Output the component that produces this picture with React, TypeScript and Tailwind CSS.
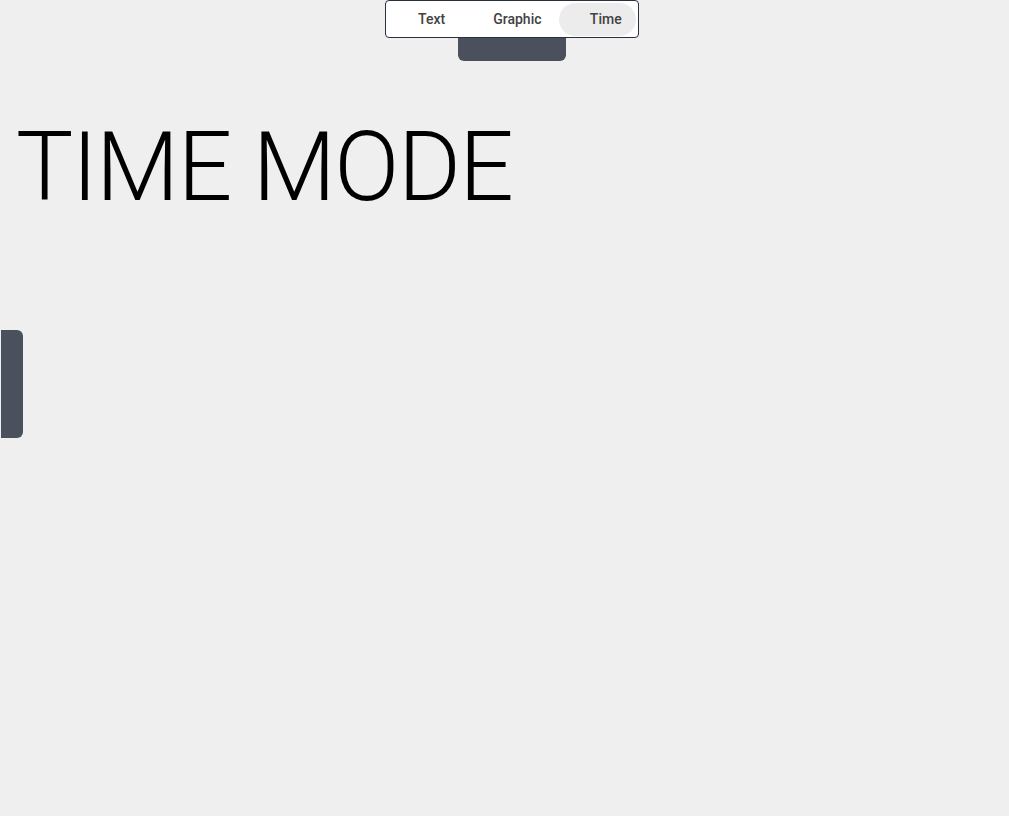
import { useState } from "react";

const modes = ["Text", "Graphic", "Time"] as const
type Mode = typeof modes[number]

export default function App() {
    const [mode, setMode] = useState<Mode>("Time")

    const btnStyle = "h-[33px] rounded-full text-sm font-medium text-[#424242] cursor-pointer"

    return (
        <div className="min-h-[816px] w-full bg-[#efefef] font-['Roboto',sans-serif] relative">
            <div className="flex flex-col items-center pl-[14px]">
                <div className="flex items-center w-[254px] h-[38px] px-[2px] bg-white border border-[#27303d] rounded-[4px]">
                    <button
                        className={`${btnStyle} w-[89px] ${mode == "Text" ? "bg-[#ececec]" : ""}`}
                        onClick={() => setMode("Text")}>
                        Text
                    </button>
                    <button
                        className={`${btnStyle} w-[84px] ${mode == "Graphic" ? "bg-[#ececec]" : ""}`}
                        onClick={() => setMode("Graphic")}>
                        Graphic
                    </button>
                    <button
                        className={`${btnStyle} w-[77px] pl-[17px] ${mode == "Time" ? "bg-[#ececec]" : ""}`}
                        onClick={() => setMode("Time")}>
                        Time
                    </button>
                </div>
                <div className="w-[108px] h-[23px] bg-[#4a515c] rounded-b-[6px]" />
            </div>

            <h1 className="mt-[42px] pl-[16px] text-[96px] leading-[128px] font-light text-black tracking-[-1.45px]">
                {mode.toUpperCase()} MODE
            </h1>

            <div className="mt-[99px] ml-[1px] w-[22px] h-[108px] bg-[#4a515c] rounded-r-[6px]" />
        </div>
    )
}
